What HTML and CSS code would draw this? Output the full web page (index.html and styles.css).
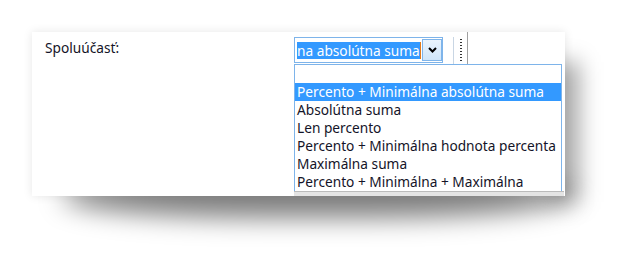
FILE: index.html
```html
<!DOCTYPE html>
<html lang="sk">
<head>
    <meta charset="UTF-8">
    <title>Spoluúčasť</title>
    <link rel="stylesheet" href="styles.css">
</head>
<body>
    <div class="panel">
        <div class="form-row">
            <span class="field-label">Spoluúčasť:</span>
            <div class="combo-wrap">
                <div class="combo">
                    <div class="combo-text"><span class="selected-text">na absolútna suma</span><span class="caret"></span></div>
                    <div class="combo-btn">
                        <svg width="9" height="6" viewBox="0 0 9 6"><path d="M1 1 L4.5 4.5 L8 1" fill="none" stroke="#000" stroke-width="2"/></svg>
                    </div>
                </div>
                <div class="col-sep"></div>
                <div class="grip"></div>
                <div class="col-line"></div>
                <ul class="dropdown">
                    <li></li>
                    <li class="active">Percento + Minimálna absolútna suma</li>
                    <li>Absolútna suma</li>
                    <li>Len percento</li>
                    <li>Percento + Minimálna hodnota percenta</li>
                    <li>Maximálna suma</li>
                    <li>Percento + Minimálna + Maximálna</li>
                </ul>
            </div>
        </div>
        <div class="under-strip"></div>
    </div>
</body>
</html>
```

FILE: styles.css
```css
body {
    margin: 0;
    background-color: white;
    font-family: 'Noto Sans', 'Open Sans', sans-serif;
    font-size: 13.7px;
    color: #141428;
    width: 630px;
    height: 261px;
    overflow: hidden;
}
.panel {
    position: relative;
    margin: 32px 0 0 32px;
    width: 533px;
    height: 164px;
    background-color: white;
    box-shadow: 0 0 9px rgba(0, 0, 0, 0.1);
}
.panel::before {
    content: "";
    position: absolute;
    left: 30px;
    right: -5px;
    bottom: -22px;
    height: 44px;
    background: rgba(0, 0, 0, 0.5);
    filter: blur(13px);
    border-radius: 40% / 50%;
    z-index: -1;
}
.panel::after {
    content: "";
    position: absolute;
    right: -14px;
    top: 30px;
    bottom: -6px;
    width: 28px;
    background: rgba(0, 0, 0, 0.35);
    filter: blur(11px);
    z-index: -1;
}
.form-row {
    display: flex;
    padding: 7px 0 0 13px;
}
.field-label {
    width: 249px;
    line-height: 18px;
}
.combo-wrap {
    position: relative;
    display: flex;
    align-items: flex-start;
    margin-top: -2px;
}
.combo {
    display: flex;
    width: 149px;
    height: 26px;
    box-sizing: border-box;
    border: 1px solid #7eb4ea;
    background: white;
}
.combo-text {
    display: flex;
    align-items: center;
    padding-left: 2px;
    width: 125px;
}
.selected-text {
    background-color: #3399ff;
    color: white;
    line-height: 17px;
    white-space: nowrap;
}
.caret {
    width: 1px;
    height: 17px;
    background: #e07a1a;
}
.combo-btn {
    display: flex;
    align-items: center;
    justify-content: center;
    width: 20px;
    margin: 1px 0 1px 0;
    box-sizing: border-box;
    border: 1px solid #7eb4ea;
    background: linear-gradient(#eaf4fd, #cfe5f9);
}
.col-sep {
    width: 1px;
    height: 27px;
    margin-left: 10px;
    background: #c9d6e4;
}
.grip {
    width: 2px;
    height: 24px;
    margin: 1px 0 0 6px;
    background-image: radial-gradient(circle, #333 0.8px, transparent 1px);
    background-size: 2px 3px;
}
.col-line {
    width: 1px;
    height: 34px;
    margin: -5px 0 0 5px;
    background: #a0a0a0;
}
.dropdown {
    position: absolute;
    left: 0;
    top: 27px;
    width: 268px;
    margin: 0;
    padding: 0;
    list-style: none;
    box-sizing: border-box;
    border: 1px solid #7eb4ea;
    background: white;
}
.dropdown li {
    height: 18px;
    line-height: 18px;
    padding-left: 2px;
    white-space: nowrap;
}
.dropdown li.active {
    background-color: #3399ff;
    color: white;
}
.under-strip {
    position: absolute;
    left: 262px;
    bottom: 0;
    width: 270px;
    height: 4px;
    background: #e4e4e4;
    border-top: 1px solid #bbb;
}
```
